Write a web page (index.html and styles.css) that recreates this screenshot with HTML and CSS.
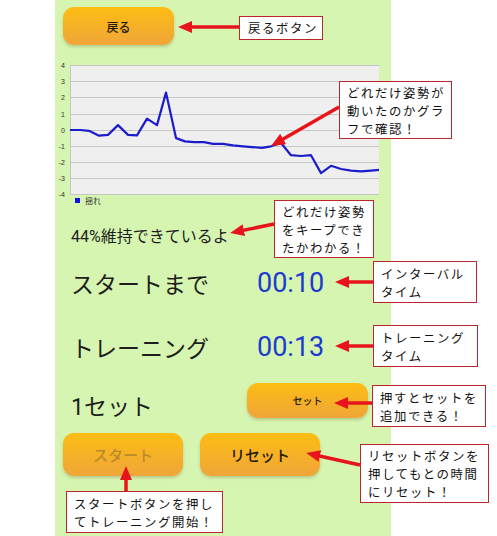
FILE: index.html
```html
<!DOCTYPE html>
<html lang="ja">
<head>
<meta charset="utf-8">
<title>トレーニング</title>
<link rel="stylesheet" href="styles.css">
</head>
<body>
<div class="page">
  <main class="panel">
    <button class="btn btn-back">戻る</button>

    <svg class="chart" width="330" height="150" viewBox="0 0 330 150">
      <rect x="15" y="7" width="309" height="130" fill="#efefef"/>
      <g stroke="#c6c6c6" stroke-width="1">
        <line x1="15" y1="7.5" x2="324" y2="7.5"/>
        <line x1="15" y1="23.5" x2="324" y2="23.5"/>
        <line x1="15" y1="39.5" x2="324" y2="39.5"/>
        <line x1="15" y1="56.5" x2="324" y2="56.5"/>
        <line x1="15" y1="72.5" x2="324" y2="72.5"/>
        <line x1="15" y1="88.5" x2="324" y2="88.5"/>
        <line x1="15" y1="104.5" x2="324" y2="104.5"/>
        <line x1="15" y1="120.5" x2="324" y2="120.5"/>
        <line x1="15" y1="136.5" x2="324" y2="136.5"/>
        <line x1="15.5" y1="7" x2="15.5" y2="137"/>
      </g>
      <g class="axis" text-anchor="end">
        <text x="10" y="10">4</text>
        <text x="10" y="26">3</text>
        <text x="10" y="42">2</text>
        <text x="10" y="59">1</text>
        <text x="10" y="75">0</text>
        <text x="10" y="91">-1</text>
        <text x="10" y="107">-2</text>
        <text x="10" y="123">-3</text>
        <text x="10" y="139">-4</text>
      </g>
      <polyline fill="none" stroke="#1c1ccc" stroke-width="2.2" stroke-linejoin="round"
        points="15,72 25,72 34,72.8 44,77.7 53,76.9 63,67.1 73,76.9 82,77.4 92,60.6 102,67.1 111,34.6 121,80.1 130,83.4 139,84.2 149,84.2 158,85.8 168,85.8 178,87.4 188,88.3 197,89.1 207,89.9 216,88.3 226,85 236,97.2 246,98 256,97.2 266,115.1 276,107.8 286,111 296,112.6 306,113.4 316,112.6 324,111.8"/>
      <rect x="20" y="140" width="5" height="5" fill="#1010e0"/>
      <text class="legend" x="30" y="146">揺れ</text>
    </svg>

    <p class="status">44%維持できているよ</p>

    <div class="timer-row row-first">
      <span class="timer-label">スタートまで</span>
      <span class="timer-value">00:10</span>
    </div>
    <div class="timer-row row-second">
      <span class="timer-label">トレーニング</span>
      <span class="timer-value">00:13</span>
    </div>

    <div class="set-row">
      <span class="set-label">1セット</span>
      <button class="btn btn-set">セット</button>
    </div>

    <div class="action-row">
      <button class="btn btn-action btn-disabled">スタート</button>
      <button class="btn btn-action">リセット</button>
    </div>
  </main>

  <div class="notes">
    <svg class="arrows" width="497" height="536" viewBox="0 0 497 536">
      <defs>
        <marker id="head" viewBox="0 0 14 12" refX="6" refY="6" markerWidth="14" markerHeight="12" markerUnits="userSpaceOnUse" orient="auto">
          <path d="M0,0 L14,6 L0,12 Z" fill="#e8141b"/>
        </marker>
      </defs>
      <g stroke="#e8141b" stroke-width="3.5" marker-end="url(#head)">
        <line x1="239" y1="27" x2="186" y2="27"/>
        <line x1="339" y1="107" x2="278" y2="142"/>
        <line x1="274" y1="224" x2="238" y2="231.4"/>
        <line x1="373" y1="282" x2="343" y2="282"/>
        <line x1="373" y1="346" x2="343" y2="346"/>
        <line x1="372" y1="403" x2="342" y2="403"/>
        <line x1="360" y1="465" x2="314" y2="454.7"/>
        <line x1="126" y1="491" x2="126" y2="474"/>
      </g>
    </svg>
    <div class="note note-back"><span class="note-line">戻るボタン</span></div>
    <div class="note note-graph"><span class="note-line">どれだけ姿勢が</span><span class="note-line">動いたのかグラ</span><span class="note-line">フで確認！</span></div>
    <div class="note note-keep"><span class="note-line">どれだけ姿勢</span><span class="note-line">をキープでき</span><span class="note-line">たかわかる！</span></div>
    <div class="note note-interval"><span class="note-line">インターバル</span><span class="note-line">タイム</span></div>
    <div class="note note-training"><span class="note-line">トレーニング</span><span class="note-line">タイム</span></div>
    <div class="note note-set"><span class="note-line">押すとセットを</span><span class="note-line">追加できる！</span></div>
    <div class="note note-reset"><span class="note-line">リセットボタンを</span><span class="note-line">押してもとの時間</span><span class="note-line">にリセット！</span></div>
    <div class="note note-start"><span class="note-line">スタートボタンを押し</span><span class="note-line">てトレーニング開始！</span></div>
  </div>
</div>
</body>
</html>
```

FILE: styles.css
```css
* { box-sizing: border-box; }

html, body {
  margin: 0;
  padding: 0;
  background: #ffffff;
}

body {
  font-family: Roboto, "Noto Sans CJK JP", sans-serif;
  color: #1e1e1e;
}

.page {
  position: relative;
  width: 497px;
  height: 536px;
  overflow: hidden;
}

.panel {
  margin-left: 55px;
  width: 336px;
  height: 536px;
  background: #d6f5b0;
  padding-top: 7px;
  display: flex;
  flex-direction: column;
  align-items: flex-start;
}

.btn {
  border: none;
  border-radius: 11px;
  background: linear-gradient(#fdbd13, #efa539);
  box-shadow: 0 2px 3px rgba(90, 90, 40, 0.25);
  font-family: Roboto, "Noto Sans CJK JP", sans-serif;
  font-weight: 500;
  color: #241b04;
  padding: 0;
  cursor: pointer;
}

.btn-back {
  margin-left: 8px;
  width: 111px;
  height: 38px;
  font-size: 12px;
}

.chart {
  display: block;
  margin-top: 13px;
}

.axis {
  font-family: "Liberation Sans", sans-serif;
  font-size: 7px;
  fill: #333;
}

.legend {
  font-family: "Noto Sans CJK JP", sans-serif;
  font-size: 8px;
  fill: #333;
}

.status {
  margin: 19px 0 0 16px;
  height: 20px;
  line-height: 20px;
  font-size: 16px;
}

.timer-row {
  display: grid;
  grid-template-columns: 186px auto;
  align-items: center;
  margin-left: 16px;
  height: 44px;
}

.row-first { margin-top: 14px; }
.row-second { margin-top: 20px; }

.timer-label {
  font-size: 23px;
}

.timer-value {
  font-size: 27px;
  color: #1d3bd1;
}

.set-row {
  display: flex;
  align-items: center;
  margin: 14px 0 0 16px;
  height: 35px;
}

.set-label {
  width: 176px;
  font-size: 23px;
  padding-top: 8px;
}

.btn-set {
  width: 121px;
  height: 35px;
  font-size: 10px;
}

.action-row {
  display: flex;
  gap: 17px;
  margin: 15px 0 0 8px;
}

.btn-action {
  width: 120px;
  height: 43px;
  font-size: 15px;
}

.btn-disabled {
  color: #bb8b2c;
}

/* annotation layer */
.notes {
  position: absolute;
  left: 0;
  top: 0;
  width: 497px;
  height: 536px;
  pointer-events: none;
}

.arrows {
  position: absolute;
  left: 0;
  top: 0;
}

.note {
  position: absolute;
  display: flex;
  flex-direction: column;
  background: #ffffff;
  border: 1px solid #b9262c;
  font-family: "Noto Sans CJK JP", sans-serif;
  font-size: 12.4px;
  letter-spacing: 1.6px;
  color: #111;
  padding: 3px 0 0 7px;
  white-space: nowrap;
}

.note-line {
  display: block;
  height: 18px;
  line-height: 18px;
}

.note-back { left: 239px; top: 16px; width: 84px; height: 24px; padding: 2px 0 0 8px; }
.note-graph { left: 339px; top: 81px; width: 113px; height: 58px; padding-top: 2px; }
.note-keep { left: 274px; top: 200px; width: 100px; height: 58px; padding-top: 2px; }
.note-interval { left: 373px; top: 261px; width: 104px; height: 42px; padding-top: 3px; }
.note-training { left: 373px; top: 325px; width: 105px; height: 42px; padding-top: 3px; }
.note-set { left: 372px; top: 385px; width: 114px; height: 42px; padding-top: 3px; }
.note-reset { left: 360px; top: 444px; width: 129px; height: 59px; padding-top: 2px; }
.note-start { left: 66px; top: 491px; width: 157px; height: 42px; padding-top: 3px; }
```
